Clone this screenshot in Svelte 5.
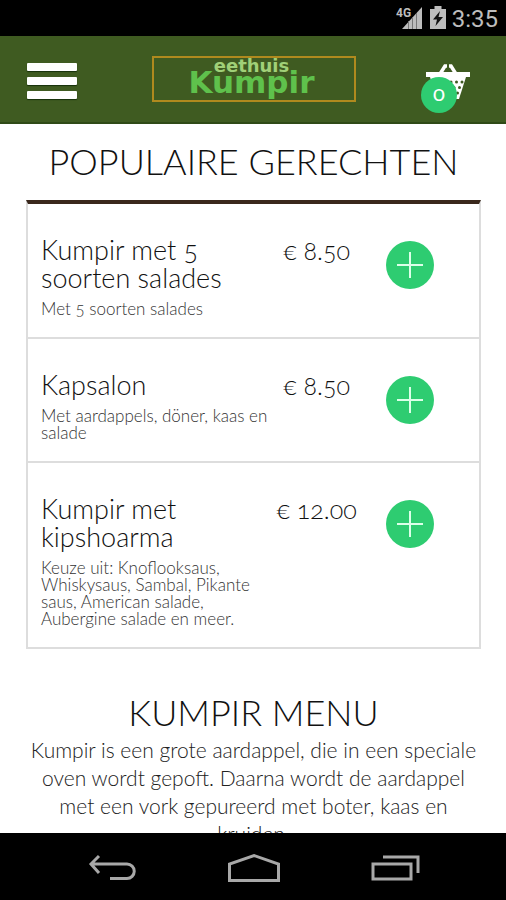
<script>
  const dishes = [
    { name: 'Kumpir met 5 soorten salades', info: 'Met 5 soorten salades', price: '8.50' },
    { name: 'Kapsalon', info: 'Met aardappels, döner, kaas en salade', price: '8.50' },
    {
      name: 'Kumpir met kipshoarma',
      info: 'Keuze uit: Knoflooksaus, Whiskysaus, Sambal, Pikante saus, American salade, Aubergine salade en meer.',
      price: '12.00'
    }
  ];

  let count = $state(0);
</script>

<div class="screen">
  <div class="status">
    <svg width="28" height="24" viewBox="0 0 28 24">
      <text x="0" y="11" class="net">4G</text>
      <path d="M26 1v22H6z" fill="#bdbdbd" />
      <path d="M12.500 15v8M16.500 11v12M20.500 7v16" stroke="#777" stroke-width="1" />
    </svg>
    <svg width="16" height="24" viewBox="0 0 16 24">
      <path d="M4.500 0h7v3H16v20H0V3h4.500z" fill="#bdbdbd" />
      <path d="M10 5L3 13.500h4L5.500 20 13 11H8.500z" fill="#111" />
    </svg>
    <span class="time">3:35</span>
  </div>

  <header>
    <button class="menu" aria-label="Menu">
      <span></span>
      <span></span>
      <span></span>
    </button>
    <a class="logo" href="#home">
      <span class="small">eethuis</span>
      <span class="big">Kumpir</span>
    </a>
    <button class="cart" aria-label="Winkelmand">
      <svg width="44" height="36" viewBox="0 0 44 36">
        <path d="M0 8h44v5H0z" fill="#fff" />
        <path d="M4 13h36l-7 22H11z" fill="#fff" />
        <path d="M14 10L19 2h2M30 10L25 2h-2" fill="none" stroke="#fff" stroke-width="3.500" />
        <g fill="#3f5b21">
          <circle cx="25" cy="18" r="1.500" />
          <circle cx="30.500" cy="18" r="1.500" />
          <circle cx="36" cy="18" r="1.500" />
          <circle cx="28" cy="23.500" r="1.500" />
          <circle cx="33.500" cy="23.500" r="1.500" />
          <circle cx="31.500" cy="29" r="1.500" />
        </g>
      </svg>
      <span class="badge">{count}</span>
    </button>
  </header>

  <main>
    <h2>POPULAIRE GERECHTEN</h2>
    <ul>
      {#each dishes as dish}
        <li>
          <div class="dish">
            <h3>{dish.name}</h3>
            <p>{dish.info}</p>
          </div>
          <span class="price">€ {dish.price}</span>
          <button class="add" aria-label="{dish.name} toevoegen" onclick={() => count++}>
            <svg width="26" height="26" viewBox="0 0 26 26">
              <path d="M13 0v26M0 13h26" stroke="#dcffe8" stroke-width="2" />
            </svg>
          </button>
        </li>
      {/each}
    </ul>

    <h2>KUMPIR MENU</h2>
    <p class="intro">
      Kumpir is een grote aardappel, die in een speciale oven wordt gepoft. Daarna wordt de aardappel
      met een vork gepureerd met boter, kaas en kruiden.
    </p>
  </main>

  <nav>
    <button aria-label="Terug">
      <svg width="48" height="28" viewBox="0 0 48 28">
        <path d="M11 2L3 10l8 9M3 10h36a7 7 0 0 1 0 14.500H22" />
      </svg>
    </button>
    <button aria-label="Start">
      <svg width="54" height="30" viewBox="0 0 54 30">
        <path d="M2.500 27.500V11L27 2.500 51.500 11v16.500z" />
      </svg>
    </button>
    <button aria-label="Recente apps">
      <svg width="50" height="28" viewBox="0 0 50 28">
        <path d="M2 10h38v15H2zM12 3h35v16" />
      </svg>
    </button>
  </nav>
</div>

<style>
:global(body) {
  margin: 0;
}
.screen {
  display: flex;
  flex-direction: column;
  height: 100vh;
  overflow: hidden;
  background: #fff;
  color: #111;
  font-family: Lato, "Open Sans", sans-serif;
  font-weight: 300;
  font-variant-numeric: oldstyle-nums;
}
button {
  padding: 0;
  border: none;
  background: none;
  cursor: pointer;
}
svg {
  display: block;
}
h2, h3, p, ul {
  margin: 0;
  padding: 0;
  font-weight: 300;
}
.status {
  display: flex;
  flex: none;
  align-items: center;
  justify-content: flex-end;
  gap: 6px;
  height: 36px;
  padding-right: 8px;
  background: #000;
}
.net {
  font: bold 12px Roboto, sans-serif;
  fill: #bdbdbd;
}
.time {
  padding-top: 2px;
  font: 400 24px Roboto, sans-serif;
  color: #bdbdbd;
}
header {
  display: flex;
  flex: none;
  align-items: center;
  justify-content: space-between;
  box-sizing: border-box;
  height: 88px;
  padding: 0 36px 0 27px;
  border-bottom: 2px solid #2f4a17;
  background: #3f5b21;
}
.menu {
  display: flex;
  flex-direction: column;
  gap: 6px;
  padding-top: 3px;
}
.menu span {
  width: 50px;
  height: 8px;
  border-radius: 1px;
  background: #fff;
  box-shadow: 0 1px 1px #16300a;
}
.logo {
  display: flex;
  flex-direction: column;
  align-items: center;
  box-sizing: border-box;
  width: 204px;
  height: 46px;
  margin-left: 4px;
  padding-right: 4px;
  border: 2px solid #b08a1e;
  font-family: "DejaVu Sans", sans-serif;
  font-weight: bold;
  text-decoration: none;
}
.small {
  color: #a0d078;
  font-size: 18px;
  line-height: 16px;
}
.big {
  margin-top: -4px;
  color: #5fc14c;
  font-size: 31px;
  line-height: 24px;
}
.cart {
  position: relative;
  padding-top: 6px;
}
.badge {
  position: absolute;
  top: 19px;
  left: -5px;
  width: 36px;
  height: 36px;
  border-radius: 50%;
  background: #2ecc71;
  color: #fff;
  font: 400 22px/32px Lato, sans-serif;
  font-variant-numeric: oldstyle-nums;
}
main {
  flex: 1;
  min-height: 0;
  overflow: hidden;
  padding: 16px 25px 0 26px;
}
h2 {
  padding-bottom: 3px;
  font-size: 36px;
  line-height: 42px;
  text-align: center;
}
ul {
  margin: 15px 0 42px;
  border: 2px solid #ddd;
  border-top: 4px solid #3a281c;
  list-style: none;
}
li {
  display: grid;
  grid-template-columns: 54% 20% 26%;
  align-items: start;
  padding: 32px 0 20px;
}
li + li {
  border-top: 2px solid #ddd;
}
.dish {
  padding-left: 13px;
}
h3 {
  padding-right: 32px;
  font-size: 27px;
  line-height: 28px;
}
.dish p {
  margin-top: 8px;
  color: #333;
  font-size: 17px;
  line-height: 17px;
}
.price {
  font-size: 25px;
  line-height: 28px;
  text-align: center;
}
.add {
  display: flex;
  align-items: center;
  justify-content: center;
  width: 48px;
  height: 48px;
  margin: 5px 0 0 24px;
  border-radius: 50%;
  background: #2ecc71;
}
.intro {
  color: #222;
  font-size: 21px;
  line-height: 28px;
  text-align: center;
}
nav {
  display: flex;
  flex: none;
  align-items: center;
  justify-content: space-between;
  height: 67px;
  padding: 3px 85px 0 88px;
  box-sizing: border-box;
  background: #000;
}
nav path {
  fill: none;
  stroke: #a8a8a8;
  stroke-width: 3;
}
</style>
